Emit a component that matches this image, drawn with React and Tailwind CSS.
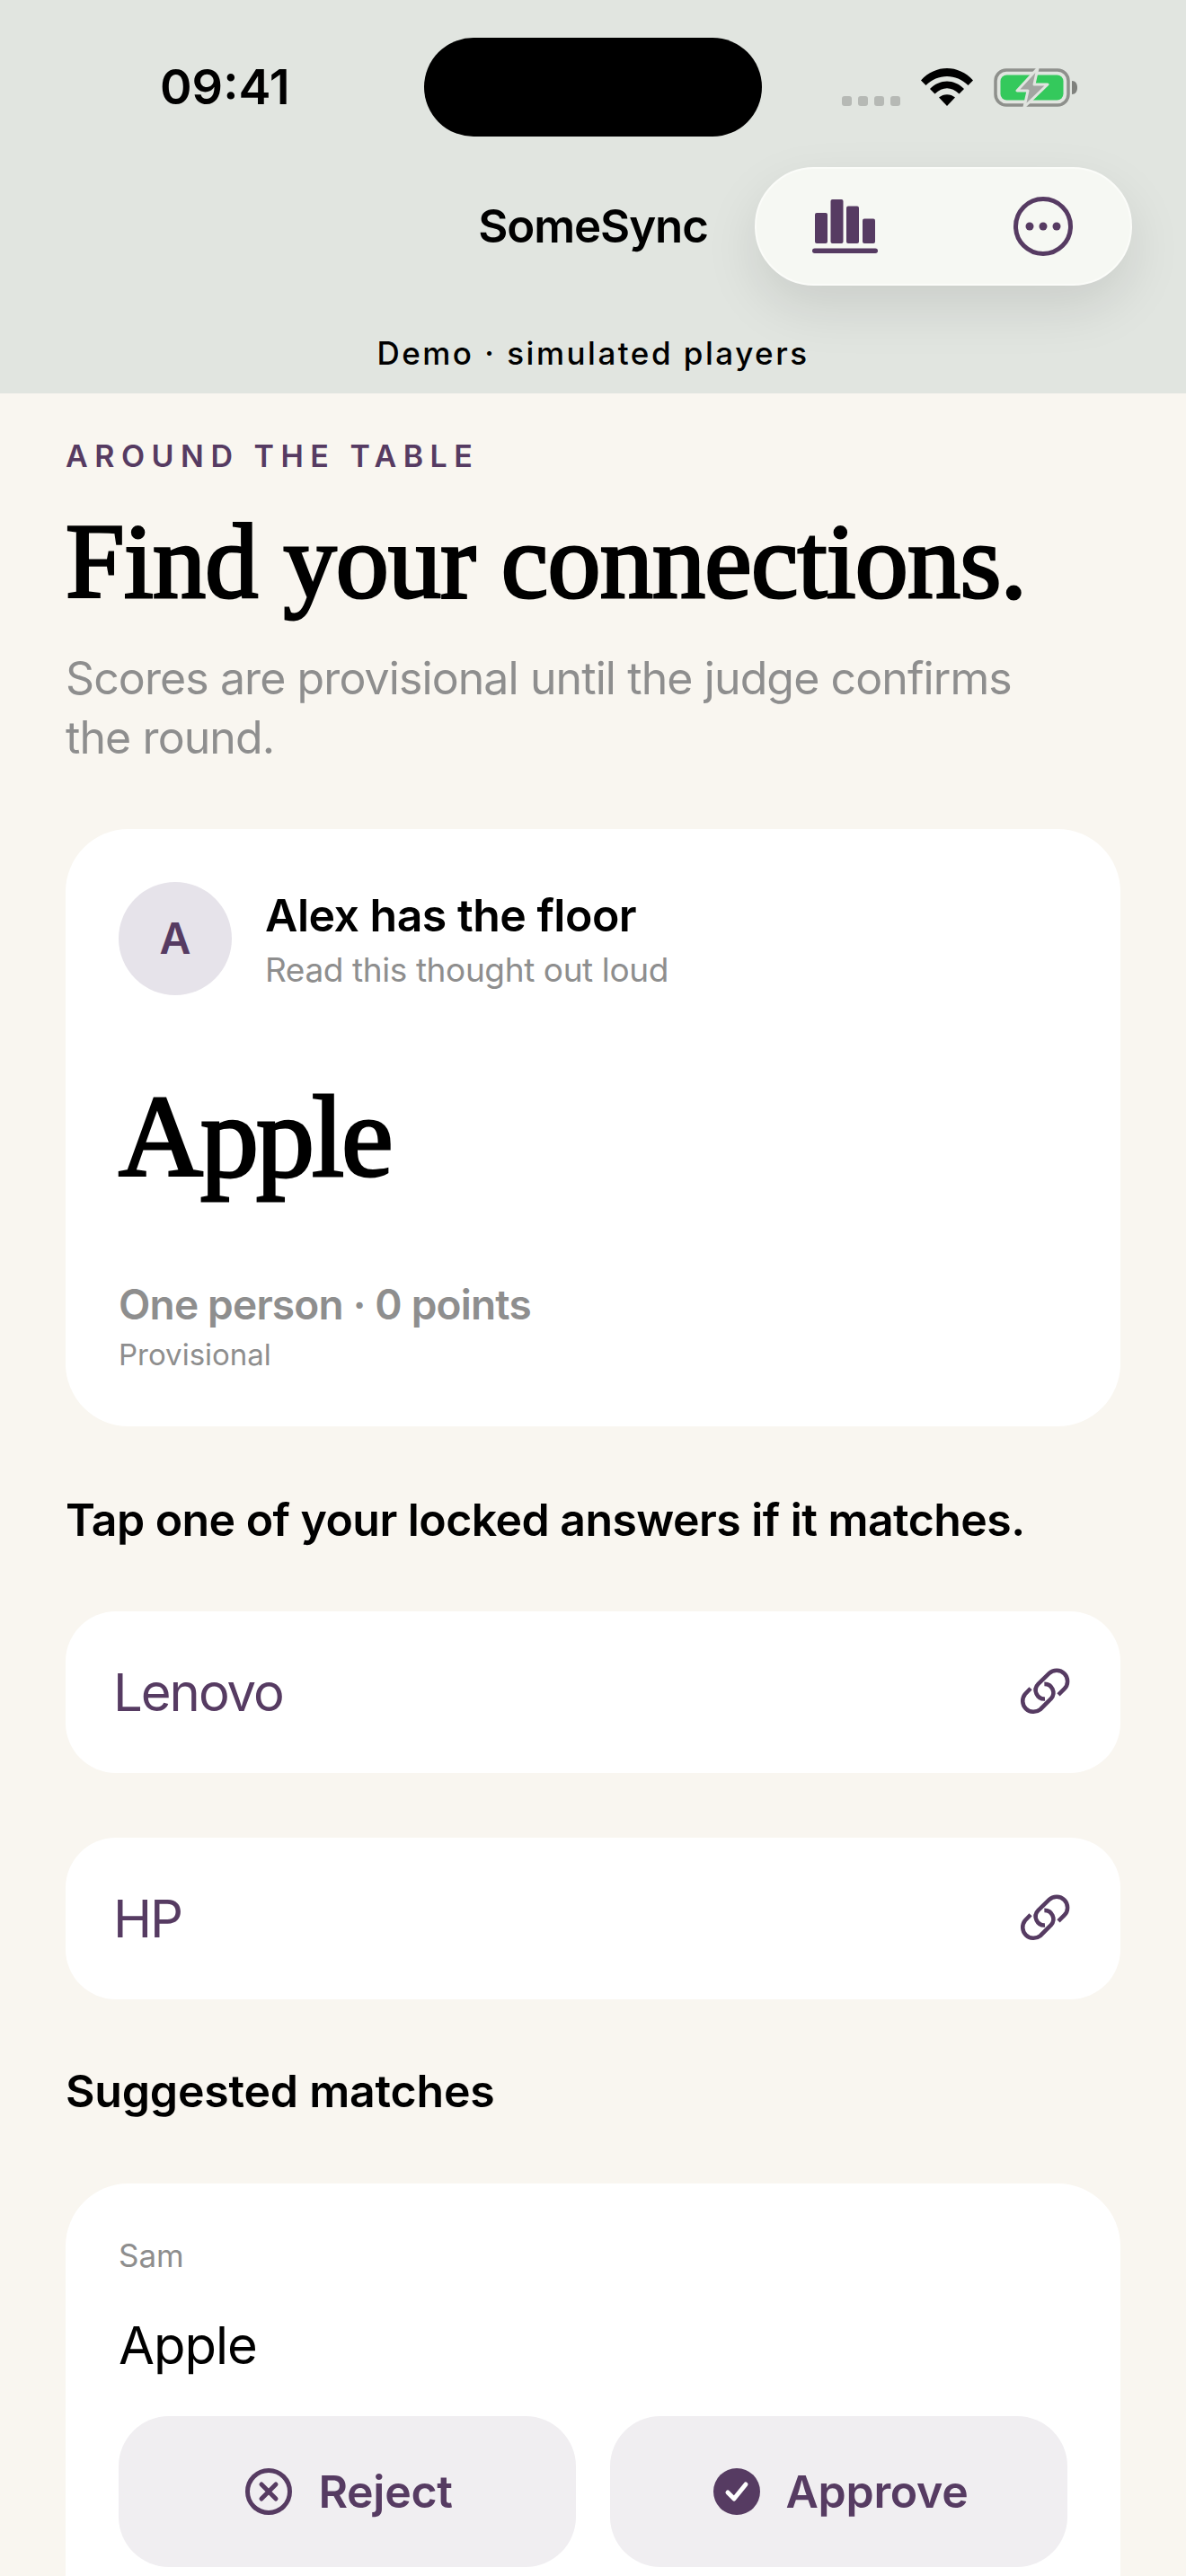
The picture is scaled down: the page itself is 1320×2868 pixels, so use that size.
const PURPLE = "#563b62";

function Wifi() {
  return (
    <svg width="58" height="42" viewBox="0 0 58 42" className="block">
      <path d="M0 13.5C16-4.5 42-4.5 58 13.5L52.5 19C39.500 5.500 18.500 5.500 5.500 19Z" fill="#000" />
      <path d="M10 23C21 11.500 37 11.500 48 23L42.500 28.500C33.500 20 24.500 20 15.500 28.500Z" fill="#000" />
      <path d="M20 32.500C25 28 33 28 38 32.500L29 42Z" fill="#000" />
    </svg>
  );
}

function Battery() {
  return (
    <svg width="94" height="43" viewBox="0 0 94 43" className="block">
      <rect x="2" y="2" width="81" height="39" rx="12" fill="none" stroke="#8e908c" strokeWidth="3.500" />
      <rect x="7.500" y="7.500" width="70" height="28" rx="7" fill="#34c95c" />
      <path d="M87 14c4 0 6 3 6 7.500s-2 7.500-6 7.500Z" fill="#7f817d" />
      <path d="M49 0 26 25H38L34 43 60 18H45Z" fill="#a3a5a2" stroke="#e0e4df" strokeWidth="3" strokeLinejoin="round" />
    </svg>
  );
}

function StatsIcon() {
  return (
    <svg width="73" height="60" viewBox="0 0 73 60" className="block" fill={PURPLE}>
      <rect x="3" y="15" width="14" height="34" rx="2" />
      <rect x="20.500" y="0" width="14" height="49" rx="2" />
      <rect x="38" y="7.500" width="14" height="41.500" rx="2" />
      <rect x="56" y="21.500" width="14" height="27.500" rx="2" />
      <rect x="0" y="54.500" width="73" height="5.500" rx="2.750" />
    </svg>
  );
}

function MoreIcon() {
  return (
    <svg width="66" height="66" viewBox="0 0 66 66" className="block">
      <circle cx="33" cy="33" r="30.500" fill="none" stroke={PURPLE} strokeWidth="5" />
      <circle cx="18" cy="33" r="4.500" fill={PURPLE} />
      <circle cx="33" cy="33" r="4.500" fill={PURPLE} />
      <circle cx="48" cy="33" r="4.500" fill={PURPLE} />
    </svg>
  );
}

function LinkIcon() {
  return (
    <svg width="56" height="56" viewBox="100 105 172 172" fill="none" stroke={PURPLE} strokeWidth="14" className="block">
      <path d="M232 200 252 180A37 37 0 0 0 200 127L163 163A30 30 0 0 0 186 214" />
      <path d="M137 178 118 198A37 37 0 0 0 170 250L207 213A30 30 0 0 0 184 163" />
    </svg>
  );
}

function RejectIcon() {
  return (
    <svg width="52" height="52" viewBox="0 0 52 52" className="block">
      <circle cx="26" cy="26" r="23.500" fill="none" stroke={PURPLE} strokeWidth="5" />
      <path d="M18 18 34 34M34 18 18 34" stroke={PURPLE} strokeWidth="5" strokeLinecap="round" />
    </svg>
  );
}

function ApproveIcon() {
  return (
    <svg width="52" height="52" viewBox="0 0 52 52" className="block">
      <circle cx="26" cy="26" r="26" fill={PURPLE} />
      <path d="M16 27 23 34 36 18" fill="none" stroke="#fff" strokeWidth="5" strokeLinecap="round" strokeLinejoin="round" />
    </svg>
  );
}

function Answer({ label }) {
  return (
    <div className="h-[180px] rounded-[56px] bg-white pl-[53px] pr-[56px] flex items-center justify-between">
      <span className="text-[58px] text-[#563b62] tracking-[-2px]">{label}</span>
      <LinkIcon />
    </div>
  );
}

export default function App() {
  return (
    <div className="w-[1320px] h-[2868px] overflow-hidden bg-[#f9f6f0] text-black font-['Inter',sans-serif]">
      <header className="relative h-[438px] bg-[#e1e5e0]">
        <div className="flex items-center h-[194px] pl-[178px] pr-[120px]">
          <span className="w-[294px] text-[54px] font-semibold leading-none">09:41</span>
          <div className="w-[376px] h-[110px] rounded-full bg-black" />
          <div className="ml-auto flex items-start gap-[23px]">
            <div className="flex gap-[7px] mt-[31px]">
              <span className="w-[11px] h-[11px] rounded-[3px] bg-[#b6b9b5]" />
              <span className="w-[11px] h-[11px] rounded-[3px] bg-[#b6b9b5]" />
              <span className="w-[11px] h-[11px] rounded-[3px] bg-[#b6b9b5]" />
              <span className="w-[11px] h-[11px] rounded-[3px] bg-[#b6b9b5]" />
            </div>
            <Wifi />
            <Battery />
          </div>
        </div>

        <div className="absolute left-0 right-0 top-[186px] h-[132px] flex items-center justify-center">
          <span className="text-[51px] font-semibold tracking-[-1.1px]">SomeSync</span>
        </div>
        <div className="absolute left-[840px] top-[186px] w-[420px] h-[132px] rounded-full bg-[#f6f8f3] border-2 border-[#fbfcf9] shadow-[0_24px_60px_rgba(0,0,0,0.1)] flex items-center justify-between pl-[62px] pr-[64px]">
          <StatsIcon />
          <MoreIcon />
        </div>
        <div className="absolute left-0 right-0 top-[370px] text-center text-[35px] font-medium tracking-[2.5px] leading-[46px]">
          Demo · simulated players
        </div>
      </header>

      <main className="px-[73px]">
        <p className="mt-[50px] text-[34px] leading-[40px] font-semibold tracking-[7.5px] text-[#563b62]">AROUND THE TABLE</p>
        <h1 className="mt-[36px] text-[118px] leading-[124px] font-normal tracking-[-0.7px] [-webkit-text-stroke:3px_black] font-['Liberation_Serif',serif]">Find your connections.</h1>
        <p className="mt-[34px] max-w-[1080px] text-[50px] leading-[66px] tracking-[-0.9px] text-[#8e8e8e]">Scores are provisional until the judge confirms the round.</p>

        <section className="mt-[69px] h-[665px] rounded-[70px] bg-white px-[59px] pt-[59px]">
          <div className="flex items-center gap-[37px]">
            <div className="w-[126px] h-[126px] rounded-full bg-[#e6e3ea] flex items-center justify-center text-[48px] font-semibold text-[#563b62]">A</div>
            <div className="pt-[2px]">
              <p className="text-[50px] leading-[60px] font-semibold tracking-[-0.5px]">Alex has the floor</p>
              <p className="mt-[8px] text-[37px] leading-[46px] text-[#8e8e8e] tracking-[-0.4px]">Read this thought out loud</p>
            </div>
          </div>
          <p className="mt-[82px] text-[130px] leading-[150px] tracking-[-3px] [-webkit-text-stroke:3px_black] font-['Liberation_Serif',serif]">Apple</p>
          <p className="mt-[84px] text-[46px] leading-[56px] font-semibold tracking-[-0.8px] text-[#8e8e8e]">One person · 0 points</p>
          <p className="mt-[6px] text-[33px] leading-[44px] text-[#8e8e8e]">Provisional</p>
        </section>

        <p className="mt-[72px] text-[50px] leading-[64px] font-semibold tracking-[-0.55px]">Tap one of your locked answers if it matches.</p>

        <div className="mt-[70px] flex flex-col gap-[72px]">
          <Answer label="Lenovo" />
          <Answer label="HP" />
        </div>

        <p className="mt-[70px] text-[50px] leading-[64px] font-semibold tracking-[-0.2px]">Suggested matches</p>

        <section className="mt-[71px] rounded-t-[70px] bg-white px-[59px] pt-[59px] pb-[80px]">
          <p className="text-[35px] leading-[42px] text-[#8e8e8e]">Sam</p>
          <p className="mt-[44px] text-[58px] leading-[70px] tracking-[-1px]">Apple</p>
          <div className="mt-[44px] grid grid-cols-2 gap-[38px]">
            <button type="button" className="h-[168px] rounded-[56px] bg-[#f0eef1] pl-[4px] flex items-center justify-center gap-[29px] text-[50px] font-semibold tracking-[-0.3px] text-[#563b62]">
              <RejectIcon />
              Reject
            </button>
            <button type="button" className="h-[168px] rounded-[56px] bg-[#f0eef1] pl-[4px] flex items-center justify-center gap-[29px] text-[50px] font-semibold tracking-[-0.3px] text-[#563b62]">
              <ApproveIcon />
              Approve
            </button>
          </div>
        </section>
      </main>
    </div>
  );
}
